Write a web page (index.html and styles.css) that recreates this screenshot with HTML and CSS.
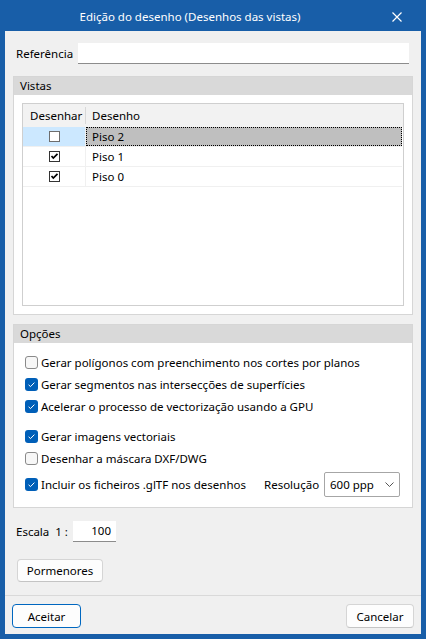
FILE: index.html
```html
<!DOCTYPE html>
<html lang="pt">
<head>
<meta charset="utf-8">
<title>Edição do desenho</title>
<link rel="stylesheet" href="styles.css">
</head>
<body>
<div class="window">
  <div class="titlebar">
    <div class="title">Edição do desenho (Desenhos das vistas)</div>
    <div class="close">
      <svg width="10" height="10" viewBox="0 0 10 10"><path d="M0.5 0.5 L9.5 9.5 M9.5 0.5 L0.5 9.5" stroke="#fff" stroke-width="1.2" fill="none"/></svg>
    </div>
  </div>
  <div class="client">
    <div class="content">
      <div class="ref-row">
        <span class="ref-label">Referência</span>
        <div class="textbox ref-input"></div>
      </div>

      <div class="group vistas">
        <div class="group-header">Vistas</div>
        <div class="group-body">
          <div class="list">
            <div class="list-head">
              <div class="hcol1">Desenhar</div>
              <div class="hdiv"></div>
              <div class="hcol2">Desenho</div>
            </div>
            <div class="list-row selected">
              <div class="cell1"><svg class="cbx" width="11" height="11" viewBox="0 0 11 11"><rect x="0.5" y="0.5" width="10" height="10" fill="#fff" stroke="#6d6d6d"/></svg></div>
              <div class="cell2"><span>Piso 2</span></div>
            </div>
            <div class="list-row">
              <div class="cell1"><svg class="cbx" width="11" height="11" viewBox="0 0 11 11"><rect x="0.5" y="0.5" width="10" height="10" fill="#fff" stroke="#333"/><path d="M2.5 5 L4.3 7 L8.5 2.8" stroke="#000" stroke-width="1.7" fill="none"/></svg></div>
              <div class="cell2"><span>Piso 1</span></div>
            </div>
            <div class="list-row">
              <div class="cell1"><svg class="cbx" width="11" height="11" viewBox="0 0 11 11"><rect x="0.5" y="0.5" width="10" height="10" fill="#fff" stroke="#333"/><path d="M2.5 5 L4.3 7 L8.5 2.8" stroke="#000" stroke-width="1.7" fill="none"/></svg></div>
              <div class="cell2"><span>Piso 0</span></div>
            </div>
          </div>
        </div>
      </div>

      <div class="group opcoes">
        <div class="group-header">Opções</div>
        <div class="group-body options">
          <div class="opt-block">
            <div class="opt">
              <span class="chk off"></span><span>Gerar polígonos com preenchimento nos cortes por planos</span>
            </div>
            <div class="opt">
              <span class="chk on"><svg width="13" height="13" viewBox="0 0 13 13"><path d="M3.6 6.8 L5.5 8.6 L9.4 4.6" stroke="#fff" stroke-width="1" fill="none"/></svg></span><span>Gerar segmentos nas intersecções de superfícies</span>
            </div>
            <div class="opt">
              <span class="chk on"><svg width="13" height="13" viewBox="0 0 13 13"><path d="M3.6 6.8 L5.5 8.6 L9.4 4.6" stroke="#fff" stroke-width="1" fill="none"/></svg></span><span>Acelerar o processo de vectorização usando a GPU</span>
            </div>
          </div>
          <div class="opt-block second">
            <div class="opt">
              <span class="chk on"><svg width="13" height="13" viewBox="0 0 13 13"><path d="M3.6 6.8 L5.5 8.6 L9.4 4.6" stroke="#fff" stroke-width="1" fill="none"/></svg></span><span>Gerar imagens vectoriais</span>
            </div>
            <div class="opt">
              <span class="chk off"></span><span>Desenhar a máscara DXF/DWG</span>
            </div>
            <div class="opt last">
              <span class="chk on"><svg width="13" height="13" viewBox="0 0 13 13"><path d="M3.6 6.8 L5.5 8.6 L9.4 4.6" stroke="#fff" stroke-width="1" fill="none"/></svg></span><span class="opt-text">Incluir os ficheiros .glTF nos desenhos</span>
              <span class="res-label">Resolução</span>
              <div class="combo">
                <span>600 ppp</span>
                <svg width="9" height="5" viewBox="0 0 9 5"><path d="M0.5 0.5 L4.5 4.5 L8.5 0.5" stroke="#555" stroke-width="1" fill="none"/></svg>
              </div>
            </div>
          </div>
        </div>
      </div>

      <div class="scale-row">
        <span class="scale-label">Escala&nbsp; 1 :</span>
        <div class="textbox scale-input">100</div>
      </div>

      <div class="btn details">Pormenores</div>
    </div>
    <div class="footer">
      <div class="btn default">Aceitar</div>
      <div class="btn cancel">Cancelar</div>
    </div>
  </div>
</div>
</body>
</html>
```

FILE: styles.css
```css
html, body {
  margin: 0;
  padding: 0;
}
body {
  font-family: "Noto Sans", "Open Sans", sans-serif;
  font-size: 11.5px;
  color: #000;
  background: #185ea8;
}
.window {
  width: 426px;
  height: 639px;
  background: #185ea8;
  box-sizing: border-box;
  padding: 0 5px 5px 5px;
  display: flex;
  flex-direction: column;
}
.titlebar {
  height: 31px;
  display: flex;
  align-items: center;
  color: #fff;
  margin: 0 -5px;
}
.title {
  width: 380px;
  text-align: center;
  font-size: 11.5px;
  padding-top: 1px;
}
.close {
  width: 34px;
  display: flex;
  justify-content: center;
  padding-top: 3px;
}
.client {
  flex: 1;
  background: #f0f0f0;
  display: flex;
  flex-direction: column;
}
.content {
  flex: 1;
  padding: 12px 8px 0 8px;
  display: flex;
  flex-direction: column;
}
.ref-row {
  display: flex;
  align-items: center;
  height: 21px;
  padding: 0 4px 0 3px;
}
.ref-label {
  width: 62px;
}
.textbox {
  background: #fff;
  border-bottom: 1px solid #8c8c8c;
  box-sizing: border-box;
  height: 21px;
}
.ref-input {
  flex: 1;
}
.group {
  border: 1px solid #d6d6d6;
  background: #fff;
}
.group-header {
  height: 18px;
  line-height: 18px;
  background: #d9d9d9;
  padding-left: 6px;
}
.vistas {
  margin-top: 12px;
}
.vistas .group-body {
  padding: 8px;
}
.list {
  height: 203px;
  box-sizing: border-box;
  border: 1px solid #cfcfcf;
  background: #fff;
}
.list-head {
  height: 23px;
  display: flex;
  align-items: center;
  background: #f2f2f2;
}
.hcol1 {
  width: 55px;
  padding-left: 7px;
}
.hdiv {
  width: 1px;
  height: 17px;
  background: #d8d8d8;
}
.hcol2 {
  padding-left: 6px;
}
.list-row {
  height: 20px;
  display: flex;
  border-bottom: 1px solid #f0f0f0;
  box-sizing: border-box;
  margin-right: 1px;
}
.cell1 {
  width: 62px;
  display: flex;
  align-items: center;
  justify-content: center;
  border-right: 1px solid #f0f0f0;
}
.cell2 {
  flex: 1;
  display: flex;
  align-items: center;
  padding-left: 6px;
  box-sizing: border-box;
}
.selected .cell1 {
  background: #cce8ff;
}
.selected .cell2 {
  background: #bfbfbf;
  border: 1px dotted #000;
  padding-left: 5px;
}
.cbx {
  display: block;
}
.opcoes {
  margin-top: 9px;
}
.options {
  padding: 8px 11px 10px 11px;
}
.opt-block.second {
  margin-top: 8px;
}
.opt {
  height: 22px;
  display: flex;
  align-items: center;
}
.opt.last {
  margin-top: 3px;
  height: 25px;
}
.chk {
  width: 13px;
  height: 13px;
  box-sizing: border-box;
  border-radius: 3px;
  margin-right: 3px;
  display: flex;
}
.chk.off {
  border: 1px solid #8a8a8a;
  background: #f7f7f7;
}
.chk.on {
  background: #005fb8;
}
.opt-text {
  width: 223px;
}
.res-label {
  width: 60px;
}
.combo {
  width: 76px;
  height: 25px;
  box-sizing: border-box;
  border: 1px solid #a6a6a6;
  border-radius: 2px;
  background: #fff;
  display: flex;
  align-items: center;
  justify-content: space-between;
  padding: 0 5px 0 5px;
}
.scale-row {
  margin-top: 13px;
  display: flex;
  align-items: center;
  padding-left: 3px;
}
.scale-label {
  width: 57px;
}
.scale-input {
  width: 43px;
  text-align: right;
  padding-right: 5px;
  line-height: 20px;
}
.btn {
  box-sizing: border-box;
  background: #fdfdfd;
  border: 1px solid #d5d5d5;
  border-bottom-color: #c4c4c4;
  border-radius: 4px;
  display: flex;
  align-items: center;
  justify-content: center;
}
.details {
  margin-top: 17px;
  margin-left: 4px;
  width: 86px;
  height: 23px;
}
.footer {
  height: 39px;
  box-sizing: border-box;
  border-top: 1px solid #d9d9d9;
  padding: 8px 7px 0 7px;
  display: flex;
  justify-content: space-between;
  align-items: flex-start;
}
.footer .btn {
  height: 24px;
}
.default {
  width: 69px;
  border: 1px solid #0067c0;
}
.cancel {
  width: 68px;
}
```
